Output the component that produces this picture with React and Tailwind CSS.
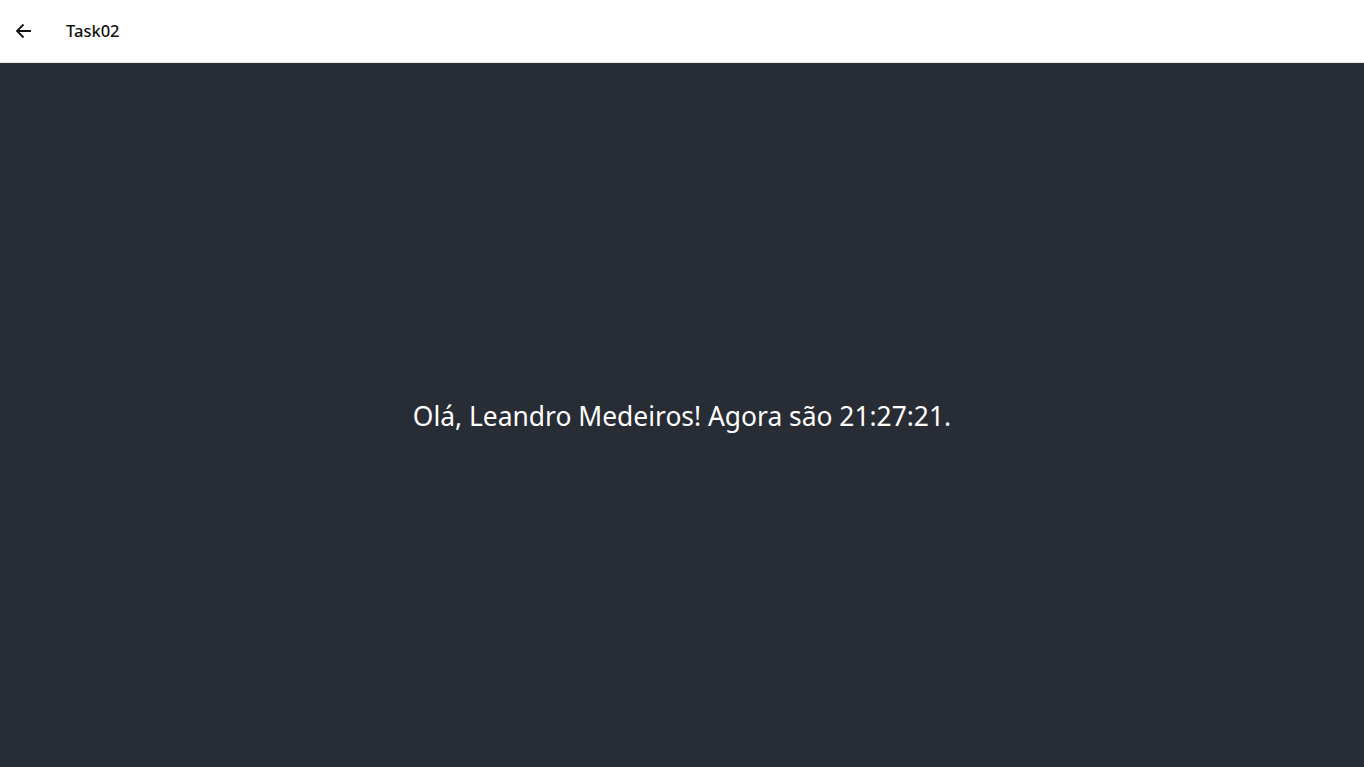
import React from "react";

export default function App() {
  return (
    <div className="h-[767px] flex flex-col bg-[#282c34]" style={{ fontFamily: '"Noto Sans", "Open Sans", sans-serif' }}>
      {/* title bar */}
      <div className="h-[63px] bg-white flex items-center border-b border-[#e5e5e5] shrink-0">
        <div className="w-[48px] flex justify-center">
          <svg width="18" height="18" viewBox="0 0 18 18" fill="none" stroke="#111" strokeWidth="1.8">
            <path d="M16 9H2M8.5 2.5L2 9l6.5 6.5" />
          </svg>
        </div>
        <span className="ml-[18px] text-[16.5px] font-medium text-[#111]">Task02</span>
      </div>

      {/* content */}
      <div className="flex-1 flex items-center justify-center">
        <p className="text-white text-[26.4px] mt-[4px]">Olá, Leandro Medeiros! Agora são 21:27:21.</p>
      </div>
    </div>
  );
}
